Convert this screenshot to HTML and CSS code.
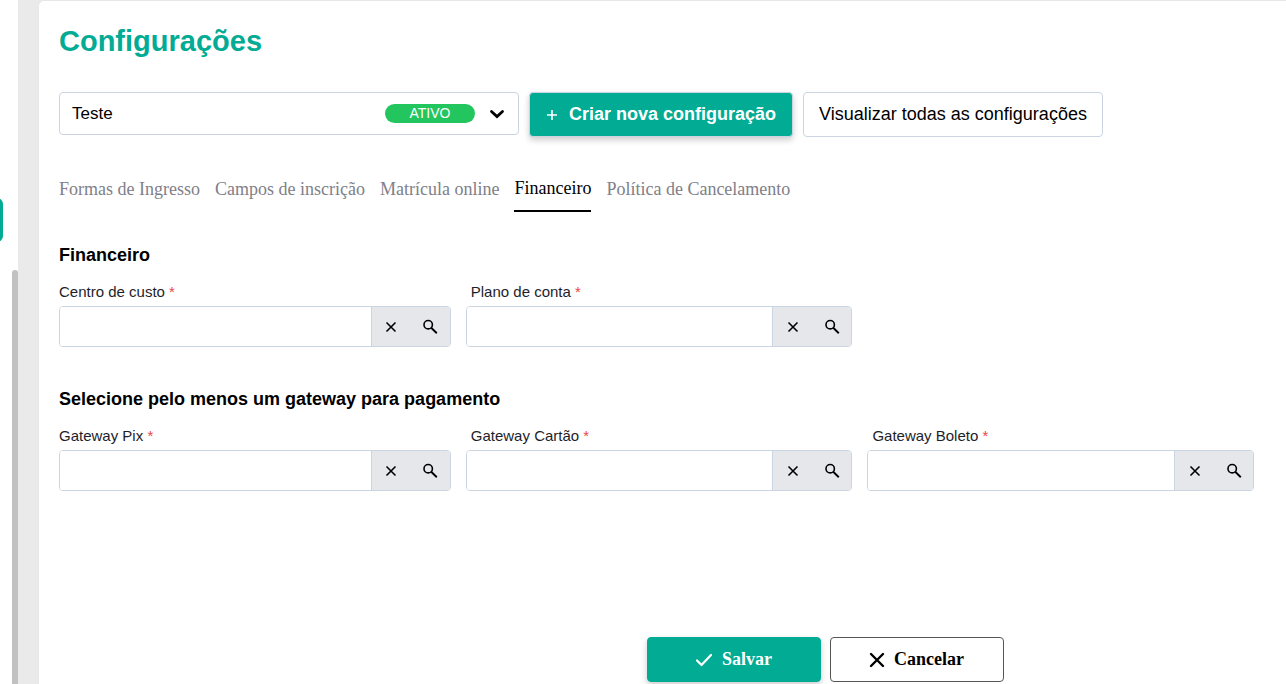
FILE: index.html
```html
<!DOCTYPE html>
<html lang="pt-BR">
<head>
    <meta charset="UTF-8">
    <meta name="viewport" content="width=device-width, initial-scale=1.0">
    <title>Configurações</title>
    <link rel="stylesheet" href="styles.css">
</head>
<body>
    <svg class="sprite" aria-hidden="true">
        <symbol id="icon-clear" viewBox="0 0 12 12">
            <path d="M1.5 1.5l9 9M10.5 1.5l-9 9" fill="none" stroke="currentColor" stroke-width="1.6"/>
        </symbol>
        <symbol id="icon-search" viewBox="0 0 16 16">
            <circle cx="6.2" cy="5.7" r="4.2" fill="none" stroke="currentColor" stroke-width="1.6"/>
            <path d="M9.2 8.8l5.6 5.4" fill="none" stroke="currentColor" stroke-width="1.9"/>
        </symbol>
    </svg>

    <div class="layout">
        <aside class="sidebar">
            <div class="sidebar-item"></div>
            <div class="sidebar-scroll"></div>
        </aside>

        <main class="card">
            <h1>Configurações</h1>

            <div class="toolbar">
                <div class="config-select">
                    <select aria-label="Configuração">
                        <option>Teste</option>
                    </select>
                    <span class="badge">ATIVO</span>
                    <svg class="chevron" viewBox="0 0 16 16" aria-hidden="true">
                        <path d="M2.5 5.5L8 10.500l5.500-5" fill="none" stroke="currentColor" stroke-width="2.8" stroke-linecap="round"/>
                    </svg>
                </div>
                <button class="btn btn-new" type="button">
                    <svg width="12" height="12" viewBox="0 0 12 12" aria-hidden="true">
                        <path d="M6 1v10M1 6h10" fill="none" stroke="currentColor" stroke-width="1.6"/>
                    </svg>
                    Criar nova configuração
                </button>
                <button class="btn btn-view" type="button">Visualizar todas as configurações</button>
            </div>

            <nav class="tabs">
                <a href="#formas">Formas de Ingresso</a>
                <a href="#campos">Campos de inscrição</a>
                <a href="#matricula">Matrícula online</a>
                <a href="#financeiro" class="active">Financeiro</a>
                <a href="#cancelamento">Política de Cancelamento</a>
            </nav>

            <form>
                <section>
                    <h2>Financeiro</h2>
                    <div class="fields">
                        <div class="field">
                            <label for="centroCusto">Centro de custo <span class="required">*</span></label>
                            <div class="input-group">
                                <input type="text" id="centroCusto">
                                <button type="button" aria-label="Limpar"><svg class="icon-clear"><use href="#icon-clear"/></svg></button>
                                <button type="button" aria-label="Pesquisar"><svg class="icon-search"><use href="#icon-search"/></svg></button>
                            </div>
                        </div>
                        <div class="field">
                            <label for="planoConta">Plano de conta <span class="required">*</span></label>
                            <div class="input-group">
                                <input type="text" id="planoConta">
                                <button type="button" aria-label="Limpar"><svg class="icon-clear"><use href="#icon-clear"/></svg></button>
                                <button type="button" aria-label="Pesquisar"><svg class="icon-search"><use href="#icon-search"/></svg></button>
                            </div>
                        </div>
                    </div>
                </section>

                <section>
                    <h2>Selecione pelo menos um gateway para pagamento</h2>
                    <div class="fields">
                        <div class="field">
                            <label for="gatewayPix">Gateway Pix <span class="required">*</span></label>
                            <div class="input-group">
                                <input type="text" id="gatewayPix">
                                <button type="button" aria-label="Limpar"><svg class="icon-clear"><use href="#icon-clear"/></svg></button>
                                <button type="button" aria-label="Pesquisar"><svg class="icon-search"><use href="#icon-search"/></svg></button>
                            </div>
                        </div>
                        <div class="field">
                            <label for="gatewayCartao">Gateway Cartão <span class="required">*</span></label>
                            <div class="input-group">
                                <input type="text" id="gatewayCartao">
                                <button type="button" aria-label="Limpar"><svg class="icon-clear"><use href="#icon-clear"/></svg></button>
                                <button type="button" aria-label="Pesquisar"><svg class="icon-search"><use href="#icon-search"/></svg></button>
                            </div>
                        </div>
                        <div class="field">
                            <label for="gatewayBoleto">Gateway Boleto <span class="required">*</span></label>
                            <div class="input-group">
                                <input type="text" id="gatewayBoleto">
                                <button type="button" aria-label="Limpar"><svg class="icon-clear"><use href="#icon-clear"/></svg></button>
                                <button type="button" aria-label="Pesquisar"><svg class="icon-search"><use href="#icon-search"/></svg></button>
                            </div>
                        </div>
                    </div>
                </section>

                <div class="actions">
                    <button class="btn btn-save" type="submit">
                        <svg width="18" height="14" viewBox="0 0 18 14" aria-hidden="true">
                            <path d="M2 7.5l4.500 4.500L16 2" fill="none" stroke="currentColor" stroke-width="2.2" stroke-linecap="round" stroke-linejoin="round"/>
                        </svg>
                        Salvar
                    </button>
                    <button class="btn btn-cancel" type="button">
                        <svg width="16" height="16" viewBox="0 0 16 16" aria-hidden="true">
                            <path d="M2 2l12 12M14 2L2 14" fill="none" stroke="currentColor" stroke-width="2.4" stroke-linecap="round"/>
                        </svg>
                        Cancelar
                    </button>
                </div>
            </form>
        </main>
    </div>
</body>
</html>
```
FILE: styles.css
```css
* {
    box-sizing: border-box;
}
body {
    margin: 0;
    font-family: 'Liberation Sans', Arial, sans-serif;
    color: #000;
    background-color: #eaeaea;
}
.sprite {
    display: none;
}
.layout {
    display: flex;
    min-height: 100vh;
}

/* sidebar */
.sidebar {
    display: flex;
    justify-content: space-between;
    width: 18px;
    flex-shrink: 0;
    overflow: hidden;
    background-color: #fff;
}
.sidebar-item {
    width: 15px;
    height: 44px;
    margin-top: 198px;
    margin-left: -12px;
    border-radius: 6px;
    background-color: #02ab94;
}
.sidebar-scroll {
    width: 6px;
    margin-top: 270px;
    border-radius: 3px 3px 0 0;
    background-color: #c1c1c1;
}

/* content */
.card {
    flex: 1;
    min-width: 0;
    margin-left: 20px;
    padding: 22px 32px 1px 20px;
    border: 1px solid #e5e7eb;
    border-width: 1px 0 0 1px;
    border-top-left-radius: 6px;
    background-color: #fff;
}
h1 {
    margin: 0 0 33px;
    font-size: 29px;
    line-height: 36px;
    color: #02ab94;
}
.toolbar {
    display: flex;
    flex-wrap: wrap;
    align-items: flex-start;
    gap: 10px;
}
.config-select {
    position: relative;
    width: 460px;
}
.config-select select {
    display: block;
    width: 100%;
    height: 43px;
    padding: 0 12px;
    border: 1px solid #cbd5e1;
    border-radius: 4px;
    background-color: #fff;
    color: #000;
    font-family: inherit;
    font-size: 17px;
    appearance: none;
}
.badge {
    position: absolute;
    top: 12px;
    right: 44px;
    width: 90px;
    border-radius: 10px;
    background-color: #22c55e;
    color: #fff;
    font-size: 14px;
    line-height: 19px;
    text-align: center;
    pointer-events: none;
}
.chevron {
    position: absolute;
    top: 14px;
    right: 14px;
    width: 16px;
    height: 16px;
    pointer-events: none;
}
.btn {
    display: flex;
    align-items: center;
    justify-content: center;
    height: 45px;
    padding: 0;
    border: 1px solid #cbd5e1;
    border-radius: 4px;
    background-color: #fff;
    color: #000;
    font-family: inherit;
    font-size: 18px;
    cursor: pointer;
}
.btn-new {
    gap: 11px;
    width: 264px;
    background-color: #02ab94;
    color: #fff;
    font-weight: bold;
    box-shadow: 0 3px 6px rgba(0, 0, 0, 0.2);
}
.btn-view {
    width: 300px;
}

/* tabs */
.tabs {
    display: flex;
    gap: 15px;
    margin-top: 33px;
}
.tabs a {
    padding: 10px 0 12px;
    border-bottom: 2px solid transparent;
    color: #808089;
    font-family: 'Liberation Serif', 'Times New Roman', serif;
    font-size: 18px;
    line-height: 18px;
    text-decoration: none;
}
.tabs .active {
    padding: 9px 0 13px;
    border-color: #000;
    color: #000;
}

/* form */
section {
    margin-top: 33px;
}
section + section {
    margin-top: 42px;
}
h2 {
    margin: 0 0 18px;
    font-size: 18px;
    line-height: 20px;
}
.fields {
    display: grid;
    grid-template-columns: 76fr 75fr 75fr;
    gap: 15px;
}
.field label {
    display: block;
    margin-bottom: 5px;
    font-size: 15px;
    line-height: 18px;
    color: #1e1e2a;
}
.field + .field label {
    padding-left: 5px;
}
.required {
    color: #ef4444;
}
.input-group {
    display: flex;
    height: 41px;
    border: 1px solid #cbd5e1;
    border-radius: 4px;
    overflow: hidden;
}
.input-group input {
    flex: 1;
    min-width: 0;
    padding: 0 12px;
    border: 0;
    border-right: 1px solid #cbd5e1;
    font-family: inherit;
    font-size: 15px;
}
.input-group button {
    display: flex;
    align-items: center;
    justify-content: center;
    width: 39px;
    padding: 0;
    border: 0;
    background-color: #e5e7eb;
    color: #000;
    cursor: pointer;
}
.icon-clear {
    width: 12px;
    height: 12px;
}
.icon-search {
    width: 16px;
    height: 16px;
}
.actions {
    display: flex;
    gap: 9px;
    margin-top: 146px;
    padding-left: calc(50% - 10px);
}
.actions .btn {
    gap: 9px;
    width: 174px;
    font-family: 'Liberation Serif', 'Times New Roman', serif;
    font-weight: bold;
}
.actions .btn-save {
    border-color: #02ab94;
    background-color: #02ab94;
    color: #fff;
    box-shadow: 0 3px 6px rgba(0, 0, 0, 0.2);
}
.actions .btn-cancel {
    border-color: #555;
}
```
